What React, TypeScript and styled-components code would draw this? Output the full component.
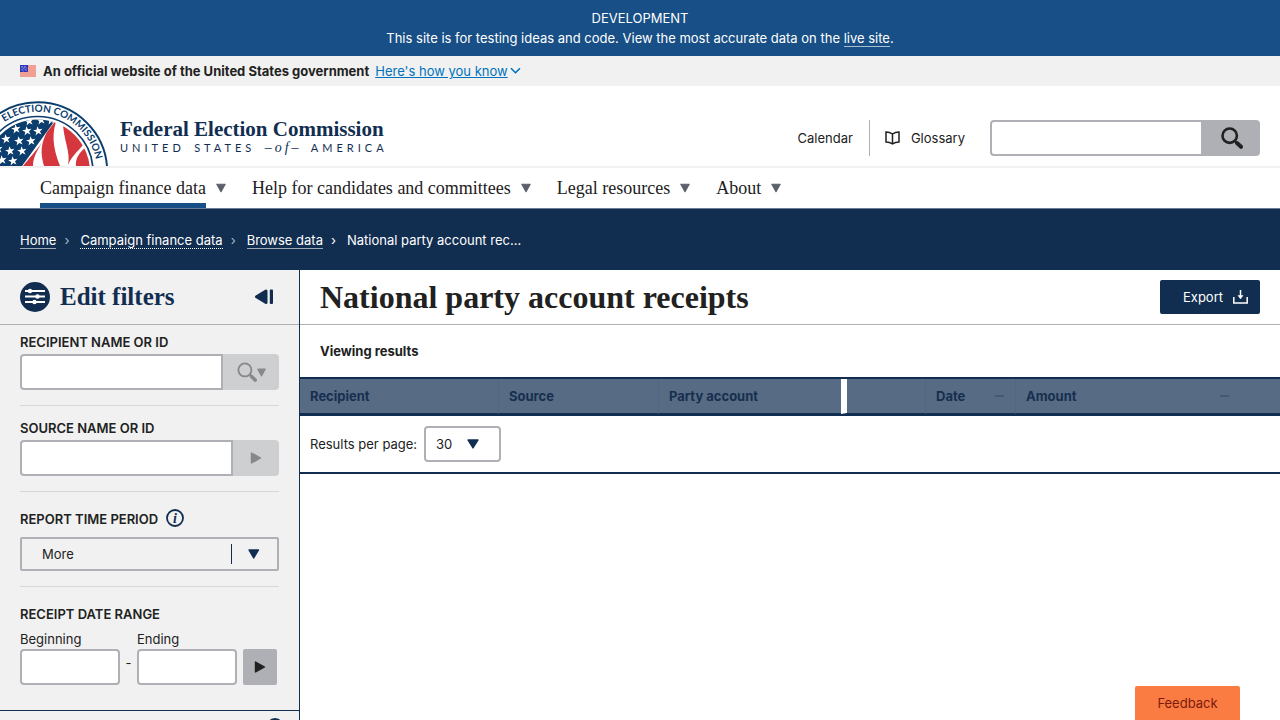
import React from "react";
import styled, { createGlobalStyle, css } from "styled-components";

const navy = "#112e51";
const blue = "#174f86";
const gray = "#aeb0b5";
const paleGray = "#f1f1f1";
const ink = "#212121";
const sans = `Inter, "Liberation Sans", sans-serif`;
const serif = `"Liberation Serif", serif`;

const GlobalStyle = createGlobalStyle`
  *, *::before, *::after { box-sizing: border-box; }
  body {
    margin: 0;
    background: #fff;
    color: ${ink};
    font: 13px/20px ${sans};
  }
  button, input, select { font: inherit; color: inherit; margin: 0; }
  button { cursor: pointer; }
  h1, h2, p { margin: 0; }
`;

const Page = styled.div`
  display: flex;
  flex-direction: column;
  min-height: 100vh;
`;

const DevBanner = styled.div`
  padding: 8px 20px;
  background: ${blue};
  color: #fff;
  text-align: center;
`;

const LiveLink = styled.a`
  color: inherit;
  text-decoration: none;
  border-bottom: 1px solid #a9bfd4;
`;

const GovBanner = styled.div`
  display: flex;
  align-items: center;
  height: 30px;
  padding: 0 20px;
  background: ${paleGray};
  font-weight: 700;
`;

const Flag = styled.svg`
  width: 16px;
  height: 12px;
  margin-right: 7px;
`;

const KnowButton = styled.button`
  display: flex;
  align-items: center;
  gap: 2px;
  margin-left: 6px;
  padding: 0;
  border: 0;
  background: none;
  color: #0071bc;
  font-weight: 400;
  span { text-decoration: underline; }
`;

const Header = styled.header`
  display: flex;
  align-items: flex-end;
  justify-content: space-between;
  height: 82px;
  padding-right: 20px;
  border-bottom: 2px solid ${paleGray};
`;

const Brand = styled.a`
  display: flex;
  align-items: flex-end;
  gap: 10px;
  color: ${navy};
  text-decoration: none;
`;

const Seal = styled.svg`
  display: block;
  width: 110px;
  height: 66px;
  overflow: visible;
`;

const BrandText = styled.span`
  display: flex;
  flex-direction: column;
  padding-bottom: 11px;
`;

const BrandName = styled.span`
  font: 700 21px/24px ${serif};
`;

const BrandSub = styled.span`
  display: flex;
  justify-content: space-between;
  margin-right: -4px;
  font: 11px/14px Lato, ${sans};
  letter-spacing: 4px;
  em { font: italic 14px/14px ${serif}; letter-spacing: 3px; }
`;

const Tools = styled.div`
  display: flex;
  align-items: center;
  height: 36px;
  margin-bottom: 10px;
`;

const ToolLink = styled.a`
  display: flex;
  align-items: center;
  height: 36px;
  padding-right: 16px;
  border-right: 1px solid ${gray};
  color: inherit;
  text-decoration: none;
`;

const GlossaryButton = styled.button`
  display: flex;
  align-items: center;
  gap: 11px;
  padding: 0 25px 0 15px;
  border: 0;
  background: none;
`;

const Search = styled.form`
  display: flex;
  width: 270px;
`;

const TextBox = styled.input<{ $joined?: boolean }>`
  flex: 1;
  min-width: 0;
  height: 36px;
  padding: 0 8px;
  border: 2px solid ${gray};
  border-radius: ${(p) => (p.$joined ? "4px 0 0 4px" : "4px")};
  background: #fff;
`;

const FieldButton = styled.button<{ $width: number; $muted?: boolean; $square?: boolean }>`
  display: flex;
  align-items: center;
  justify-content: center;
  flex: none;
  width: ${(p) => p.$width}px;
  height: 36px;
  padding: 0;
  border: 0;
  border-radius: ${(p) => (p.$square ? "2px" : "0 4px 4px 0")};
  background: ${(p) => (p.$muted ? "#cecfd1" : gray)};
  color: ${(p) => (p.$muted ? "#888" : ink)};
`;

const Nav = styled.nav`
  display: flex;
  gap: 26px;
  height: 41px;
  padding: 0 40px;
  border-bottom: 1px solid #6d7f94;
`;

const NavButton = styled.button<{ $current?: boolean }>`
  display: flex;
  align-items: center;
  gap: 10px;
  padding: 0;
  border: 0;
  background: none;
  color: #5b616b;
  font: 18px/20px ${serif};
  span {
    height: 40px;
    padding-top: 10px;
    color: ${ink};
    ${(p) => p.$current && css`border-bottom: 5px solid ${blue};`}
  }
`;

const Breadcrumbs = styled.nav`
  display: flex;
  align-items: center;
  height: 61px;
  padding: 0 20px;
  background: ${navy};
  color: #fff;
`;

const Crumb = styled.a<{ $dotted?: boolean }>`
  height: 18px;
  line-height: 18px;
  color: inherit;
  text-decoration: none;
  border-bottom: 1px ${(p) => (p.$dotted ? "dotted #fff" : "solid #a0abb9")};
`;

const CrumbMark = styled.span<{ $dim?: boolean }>`
  width: 24px;
  padding-left: 8px;
  line-height: 18px;
  color: ${(p) => (p.$dim ? "#aeb9c6" : "#fff")};
`;

const Main = styled.main`
  display: flex;
  flex: 1;
`;

const Sidebar = styled.aside`
  flex: none;
  width: 300px;
  border-right: 1px solid ${navy};
  background: ${paleGray};
`;

const SidebarHead = styled.div`
  display: flex;
  align-items: center;
  gap: 10px;
  height: 55px;
  padding: 0 25px 0 20px;
  border-bottom: 1px solid ${gray};
  color: ${navy};
`;

const SidebarTitle = styled.h2`
  flex: 1;
  font: 700 25px/30px ${serif};
`;

const PlainButton = styled.button`
  display: flex;
  padding: 0;
  border: 0;
  background: none;
  color: ${navy};
`;

const Filters = styled.div`
  display: flex;
  flex-direction: column;
  padding: 0 20px 25px;
`;

const Filter = styled.div<{ $top: number }>`
  padding: ${(p) => p.$top}px 0 15px;
  border-bottom: 1px solid #d6d7d9;
`;

const FilterLabel = styled.label`
  display: block;
  padding-bottom: 2px;
  font-weight: 600;
  text-transform: uppercase;
`;

const LabelRow = styled.div`
  display: flex;
  align-items: flex-start;
  gap: 7px;
  padding-bottom: 6px;
`;

const Row = styled.div`
  display: flex;
`;

const Overlay = styled.div`
  display: grid;
  align-items: center;
  > * { grid-area: 1 / 1; }
  > svg { justify-self: end; pointer-events: none; }
`;

const Select = styled.select<{ $wide?: boolean }>`
  appearance: none;
  width: ${(p) => (p.$wide ? "100%" : "77px")};
  height: ${(p) => (p.$wide ? 34 : 36)}px;
  padding: 0 ${(p) => (p.$wide ? 20 : 10)}px;
  border: 2px solid ${gray};
  border-radius: ${(p) => (p.$wide ? 2 : 4)}px;
  background: ${(p) => (p.$wide ? "transparent" : "#fff")};
`;

const DateRow = styled.div`
  display: flex;
  align-items: flex-end;
`;

const DateField = styled.label`
  display: flex;
  flex-direction: column;
  width: 100px;
  input { flex: none; width: 100%; }
`;

const Dash = styled.span`
  width: 17px;
  padding-bottom: 12px;
  text-align: center;
`;

const Fieldset = styled.fieldset`
  margin: 0;
  padding: 17px 0 0;
  border: 0;
  legend { float: left; width: 100%; padding: 0 0 5px; font-weight: 600; text-transform: uppercase; }
  ${DateRow} { clear: both; }
  button { margin-left: 6px; }
`;

const Accordion = styled.button`
  display: flex;
  justify-content: flex-end;
  width: 100%;
  padding: 6px 14px;
  border: 0;
  border-top: 1px solid ${navy};
  background: none;
  color: ${navy};
`;

const Content = styled.section`
  flex: 1;
  min-width: 0;
`;

const TitleBar = styled.div`
  display: flex;
  align-items: center;
  justify-content: space-between;
  height: 55px;
  padding: 0 20px;
  border-bottom: 1px solid ${gray};
`;

const Title = styled.h1`
  font: 700 32px/36px ${serif};
`;

const ExportButton = styled.button`
  display: flex;
  align-items: center;
  gap: 10px;
  height: 34px;
  padding: 0 12px 0 23px;
  border: 0;
  border-radius: 2px;
  background: ${navy};
  color: #fff;
`;

const Viewing = styled.p`
  padding: 16px 20px;
  font-weight: 700;
`;

const Table = styled.table`
  width: 100%;
  table-layout: fixed;
  border-spacing: 0;
  border-top: 2px solid ${navy};
  border-bottom: 2px solid ${navy};
`;

const Th = styled.th<{ $width?: number; $pinned?: boolean; $end?: number }>`
  width: ${(p) => (p.$width ? `${p.$width}px` : "auto")};
  height: 35px;
  padding: 0 ${(p) => p.$end ?? 11}px 0 10px;
  border-bottom: 1px solid ${navy};
  border-left: ${(p) => (p.$pinned ? "6px solid #fff" : "1px solid #52667f")};
  background: #586b84;
  color: #172f4e;
  text-align: left;
  font-weight: 700;
  &:first-child { border-left: 0; }
`;

const SortHead = styled.div`
  display: flex;
  align-items: center;
  justify-content: space-between;
  &::after { content: ""; width: 9px; height: 2px; background: #44586f; }
`;

const Pager = styled.div`
  display: flex;
  align-items: center;
  gap: 7px;
  height: 58px;
  padding: 0 10px;
  border-bottom: 2px solid ${navy};
`;

const Feedback = styled.button`
  position: fixed;
  right: 40px;
  bottom: 0;
  width: 105px;
  height: 34px;
  padding: 0;
  border: 0;
  border-radius: 2px 2px 0 0;
  background: #fa7c43;
  color: #7a1a0c;
`;

type ArrowProps = { size: number; right?: boolean };
const Arrow = ({ size, right }: ArrowProps) => (
  <svg width={size} height={size} viewBox="0 0 12 12" aria-hidden="true">
    <path
      d="M1 1.5h10L6 10.5z"
      fill="currentColor"
      stroke="currentColor"
      strokeWidth="1.4"
      strokeLinejoin="round"
      transform={right ? "rotate(-90 6 6)" : undefined}
    />
  </svg>
);

const Magnifier = ({ size, stroke = 2.6 }: { size: number; stroke?: number }) => (
  <svg width={size} height={size} viewBox="0 0 22 22" fill="none" stroke="currentColor" aria-hidden="true">
    <circle cx="8.7" cy="8.7" r="7.2" strokeWidth={stroke} />
    <path d="M14 14l1.8 1.8" strokeWidth="2" />
    <path d="M16 16l4 3.8" strokeWidth="4" strokeLinecap="round" />
  </svg>
);

const starPoints = "0,-4.8 1.2,-1.5 4.7,-1.5 1.9,0.7 3,4 0,2 -3,4 -1.9,0.7 -4.7,-1.5 -1.2,-1.5";
const stars = [
  [29, 21], [41, 20], [16, 29], [27, 31], [38, 31], [6, 39], [19, 41],
  [31, 41], [-2, 49], [10, 51], [22, 51], [2, 60], [13, 61], [51, 20],
];

const SealDrawing = () => (
  <Seal viewBox="0 0 110 66" role="img" aria-label="Seal of the Federal Election Commission">
    <defs>
      <path id="seal-arc" d="M3.500 22.500A59.500 59.500 0 0 1 97 72" />
      <clipPath id="seal-top"><rect x="-40" y="0" width="150" height="66" /></clipPath>
      <clipPath id="seal-disc"><circle cx="37.5" cy="72" r="52.5" /></clipPath>
      <clipPath id="seal-canton"><path d="M-20 0H60L56 19 22 66H-20z" /></clipPath>
    </defs>
    <g clipPath="url(#seal-top)">
      <circle cx="37.5" cy="72" r="69.7" fill="#fff" stroke="#0b3d6d" strokeWidth="1.9" />
      <circle cx="37.5" cy="72" r="55.5" fill="none" stroke="#0b3d6d" strokeWidth="1.7" />
      <g clipPath="url(#seal-disc)">
        <g clipPath="url(#seal-canton)">
          <rect x="-20" y="0" width="90" height="66" fill="#0b3d6d" />
          {stars.map(([x, y]) => (
            <polygon key={`${x}-${y}`} points={starPoints} fill="#fff" transform={`translate(${x} ${y}) rotate(-8)`} />
          ))}
        </g>
        <g fill="#d5373f">
          <path d="M23 66C28 60 37 49 43 42C36 51 33 59 33 66z" />
          <path d="M44 66C40 53 41 43 47 32L57 19C52 32 52 46 60 66z" />
          <path d="M63 19H72L84 44C77 52 72 56 68 65C71 52 63 39 63 22z" />
          <path d="M76 66C75 59 79 53 86 47L94 66z" />
        </g>
      </g>
    </g>
    <text fill="#0b3d6d" fontFamily="Lato, sans-serif" fontSize="10" fontWeight="700">
      <textPath href="#seal-arc" startOffset="1">ELECTION COMMISSION</textPath>
    </text>
  </Seal>
);

const navItems = ["Campaign finance data", "Help for candidates and committees", "Legal resources", "About"];

export default function App() {
  return (
    <Page>
      <GlobalStyle />
      <DevBanner>
        <p>DEVELOPMENT</p>
        <p>
          This site is for testing ideas and code. View the most accurate data on the{" "}
          <LiveLink href="#live">live site</LiveLink>.
        </p>
      </DevBanner>
      <GovBanner>
        <Flag viewBox="0 0 16 12" aria-hidden="true">
          <path fill="#f0a092" d="M0 0h16v12H0z" />
          <path fill="#2b35b5" d="M0 0h8v7H0z" />
          <path d="M1 1l6 5M4 1l3 2.500M1 4l3 2.500M1 3l2-2M2 5l4-4M5 5.500l2-2" stroke="#8f96e0" strokeWidth=".7" />
        </Flag>
        An official website of the United States government
        <KnowButton type="button">
          <span>Here's how you know</span>
          <svg width="11" height="8" viewBox="0 0 11 8" fill="none" stroke="currentColor" strokeWidth="1.6" aria-hidden="true">
            <path d="M1 1.200l4.500 4.500L10 1.200" />
          </svg>
        </KnowButton>
      </GovBanner>
      <Header>
        <Brand href="#home">
          <SealDrawing />
          <BrandText>
            <BrandName>Federal Election Commission</BrandName>
            <BrandSub>
              <span>UNITED</span>
              <span>STATES</span>
              <em>–of–</em>
              <span>AMERICA</span>
            </BrandSub>
          </BrandText>
        </Brand>
        <Tools>
          <ToolLink href="#calendar">Calendar</ToolLink>
          <GlossaryButton type="button">
            <svg width="15" height="14" viewBox="0 0 15 14" fill="none" stroke="currentColor" strokeWidth="1.5" aria-hidden="true">
              <path d="M7.500 3C5.500 1.500 3.500 1 1 1v10c2.500 0 4.500.5 6.500 1.800C9.500 11.500 11.500 11 14 11V1c-2.500 0-4.500.5-6.500 2zM7.500 3v9.500" />
            </svg>
            Glossary
          </GlossaryButton>
          <Search role="search">
            <TextBox $joined type="search" aria-label="Search the site" />
            <FieldButton $width={57} type="button" aria-label="Search">
              <Magnifier size={22} />
            </FieldButton>
          </Search>
        </Tools>
      </Header>
      <Nav aria-label="Main">
        {navItems.map((item, i) => (
          <NavButton key={item} type="button" $current={i === 0}>
            <span>{item}</span>
            <Arrow size={10} />
          </NavButton>
        ))}
      </Nav>
      <Breadcrumbs aria-label="Breadcrumb">
        <Crumb href="#home">Home</Crumb>
        <CrumbMark $dim>›</CrumbMark>
        <Crumb $dotted href="#data">Campaign finance data</Crumb>
        <CrumbMark $dim>›</CrumbMark>
        <Crumb href="#browse">Browse data</Crumb>
        <CrumbMark>›</CrumbMark>
        <span>National party account rec…</span>
      </Breadcrumbs>
      <Main>
        <Sidebar>
          <SidebarHead>
            <svg width="30" height="30" viewBox="0 0 30 30" aria-hidden="true">
              <circle cx="15" cy="15" r="15" fill={navy} />
              <path d="M5 9h20M5 14.500h20M5 20h20" stroke="#fff" strokeWidth="2" />
              <g fill="#fff">
                <circle cx="10" cy="9" r="2.200" />
                <circle cx="17.500" cy="14.500" r="2.200" />
                <circle cx="14.500" cy="20" r="2.200" />
              </g>
            </svg>
            <SidebarTitle>Edit filters</SidebarTitle>
            <PlainButton type="button" aria-label="Hide filters">
              <svg width="20" height="16" viewBox="0 0 20 16" fill="currentColor" aria-hidden="true">
                <path d="M2.500 7.700L12 2v11.500z" stroke="currentColor" strokeWidth="3" strokeLinejoin="round" />
                <rect x="15.800" y=".5" width="3.200" height="14.500" rx="1" />
              </svg>
            </PlainButton>
          </SidebarHead>
          <Filters>
            <Filter $top={7}>
              <FilterLabel htmlFor="recipient">Recipient name or ID</FilterLabel>
              <Row>
                <TextBox $joined id="recipient" />
                <FieldButton $width={56} $muted type="button" aria-label="Search recipients">
                  <Magnifier size={20} stroke={2} />
                  <Arrow size={9} />
                </FieldButton>
              </Row>
            </Filter>
            <Filter $top={12}>
              <FilterLabel htmlFor="source">Source name or ID</FilterLabel>
              <Row>
                <TextBox $joined id="source" />
                <FieldButton $width={46} $muted type="button" aria-label="Apply source">
                  <Arrow size={12} right />
                </FieldButton>
              </Row>
            </Filter>
            <Filter $top={17}>
              <LabelRow>
                <FilterLabel htmlFor="period">Report time period</FilterLabel>
                <PlainButton type="button" aria-label="About report time period">
                  <svg width="20" height="20" viewBox="0 0 20 20" aria-hidden="true">
                    <circle cx="10" cy="9" r="8" fill="none" stroke="currentColor" strokeWidth="1.800" />
                    <text x="10" y="14" textAnchor="middle" fill="currentColor" fontFamily="Liberation Serif, serif" fontStyle="italic" fontWeight="700" fontSize="14">i</text>
                  </svg>
                </PlainButton>
              </LabelRow>
              <Overlay>
                <Select $wide id="period" defaultValue="More">
                  <option>More</option>
                </Select>
                <svg width="49" height="20" viewBox="0 0 49 20" aria-hidden="true">
                  <path d="M1.500 0v20" stroke={navy} />
                  <path d="M19 6h9.500L23.700 14z" fill={navy} stroke={navy} strokeWidth="1.400" strokeLinejoin="round" />
                </svg>
              </Overlay>
            </Filter>
            <Fieldset>
              <legend>Receipt date range</legend>
              <DateRow>
                <DateField>
                  Beginning
                  <TextBox />
                </DateField>
                <Dash>-</Dash>
                <DateField>
                  Ending
                  <TextBox />
                </DateField>
                <FieldButton $width={34} $square type="button" aria-label="Apply date range">
                  <Arrow size={12} right />
                </FieldButton>
              </DateRow>
            </Fieldset>
          </Filters>
          <Accordion type="button" aria-label="More filters">
            <svg width="20" height="20" viewBox="0 0 20 20" aria-hidden="true">
              <circle cx="10" cy="10" r="9" fill="currentColor" />
              <path d="M5 10h10M10 5v10" stroke="#fff" strokeWidth="2" />
            </svg>
          </Accordion>
        </Sidebar>
        <Content>
          <TitleBar>
            <Title>National party account receipts</Title>
            <ExportButton type="button">
              Export
              <svg width="15" height="14" viewBox="0 0 15 14" fill="none" stroke="#fff" strokeWidth="1.500" aria-hidden="true">
                <path d="M.8 7v6h13.400V7M7.500 0v7" />
                <path d="M5 5.500h5L7.500 9z" fill="#fff" strokeWidth=".5" />
              </svg>
            </ExportButton>
          </TitleBar>
          <Viewing>Viewing results</Viewing>
          <Table>
            <thead>
              <tr>
                <Th $width={198} scope="col">Recipient</Th>
                <Th $width={160} scope="col">Source</Th>
                <Th $width={183} scope="col">Party account</Th>
                <Th $width={84} $pinned scope="col" aria-label="Details" />
                <Th $width={90} scope="col"><SortHead>Date</SortHead></Th>
                <Th $end={51} scope="col"><SortHead>Amount</SortHead></Th>
              </tr>
            </thead>
          </Table>
          <Pager>
            <label htmlFor="per-page">Results per page:</label>
            <Overlay>
              <Select id="per-page" defaultValue="30">
                <option>30</option>
              </Select>
              <svg width="35" height="12" viewBox="0 0 35 12" aria-hidden="true">
                <path d="M2 2h10L7 10z" fill={navy} stroke={navy} strokeWidth="1.400" strokeLinejoin="round" />
              </svg>
            </Overlay>
          </Pager>
        </Content>
      </Main>
      <Feedback type="button">Feedback</Feedback>
    </Page>
  );
}
